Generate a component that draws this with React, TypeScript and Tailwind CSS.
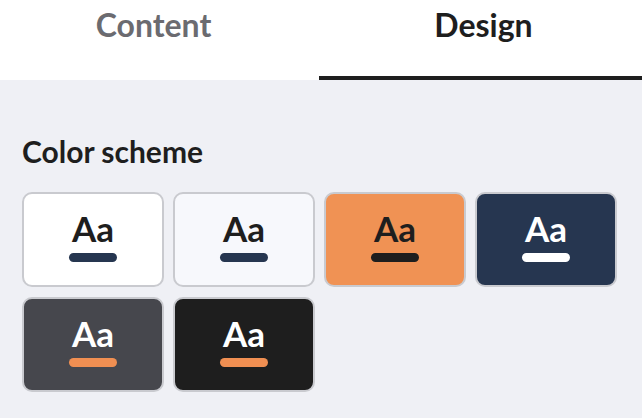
import { useState } from 'react';

// ─── Data ────────────────────────────────────────────────────

interface Scheme {
  id: string;
  bg: string;
  text: string;
  bar: string;
}

const SCHEMES: Scheme[] = [
  { id: 'light', bg: 'bg-white', text: 'text-[#1e1e1e]', bar: 'bg-[#263650]' },
  { id: 'paper', bg: 'bg-[#f7f8fc]', text: 'text-[#1e1e1e]', bar: 'bg-[#263650]' },
  { id: 'orange', bg: 'bg-[#f09254]', text: 'text-[#1e1e1e]', bar: 'bg-[#1e1e1e]' },
  { id: 'navy', bg: 'bg-[#263650]', text: 'text-white', bar: 'bg-white' },
  { id: 'slate', bg: 'bg-[#46474d]', text: 'text-white', bar: 'bg-[#f08f52]' },
  { id: 'dark', bg: 'bg-[#1e1e1e]', text: 'text-white', bar: 'bg-[#f08f52]' },
];

// ─── Component ───────────────────────────────────────────────

export default function App() {
  const [tab, setTab] = useState<'content' | 'design'>('design');
  const [scheme, setScheme] = useState('light');

  return (
    <div className="h-[418px] w-[642px] overflow-hidden bg-[#eff0f5] font-['Lato','Liberation_Sans',sans-serif]">
      {/* Tabs */}
      <div className="flex h-[80px] bg-white">
        <div
          role="tab"
          onClick={() => setTab('content')}
          className={`relative flex w-[319px] cursor-pointer justify-center pr-[12px] pt-[6px] text-[32px] font-bold leading-[1.2] ${
            tab === 'content' ? 'text-[#1e1e1e]' : 'text-[#6b6b70]'
          }`}
        >
          Content
          {tab === 'content' && <span className="absolute inset-x-0 bottom-0 h-[4px] bg-[#1e1e1e]" />}
        </div>
        <div
          role="tab"
          onClick={() => setTab('design')}
          className={`relative flex flex-1 cursor-pointer justify-center pl-[6px] pt-[6px] text-[32px] font-bold leading-[1.2] ${
            tab === 'design' ? 'text-[#1e1e1e]' : 'text-[#6b6b70]'
          }`}
        >
          Design
          {tab === 'design' && <span className="absolute inset-x-0 bottom-0 h-[4px] bg-[#1e1e1e]" />}
        </div>
      </div>

      {/* Color scheme */}
      <div className="pl-[22px] pr-[25px] pt-[53px]">
        <h2 className="text-[30px] font-bold leading-[1.2] text-[#1e1e1e]">Color scheme</h2>
        <div className="mt-[23px] grid grid-cols-4 gap-x-[9px] gap-y-[10px]">
          {SCHEMES.map((s) => (
            <button
              key={s.id}
              onClick={() => setScheme(s.id)}
              aria-pressed={scheme === s.id}
              className={`flex h-[95px] flex-col items-center justify-center rounded-[10px] border-2 border-[#c9cacf] pb-[6px] ${s.bg}`}
            >
              <span className={`text-[35px] font-bold leading-none ${s.text}`}>Aa</span>
              <span className={`mt-[7px] h-[9px] w-[48px] rounded-full ${s.bar}`} />
            </button>
          ))}
        </div>
      </div>
    </div>
  );
}
